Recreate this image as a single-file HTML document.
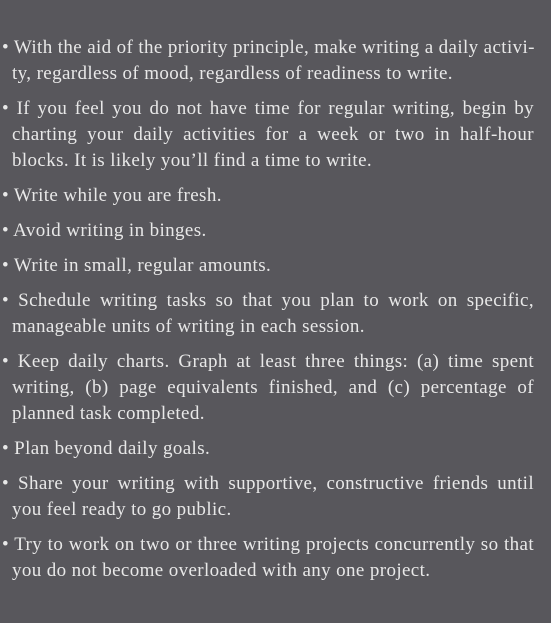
<!DOCTYPE html>
<html><head><style>
html,body{margin:0;padding:0;}
body{width:551px;height:623px;background:#58575c;color:#e8e8e8;font-family:"Liberation Serif",serif;font-size:19px;letter-spacing:0.38px;overflow:hidden;}
.w{position:absolute;left:0;top:35px;width:534px;}
p{margin:0 0 9px 0;padding-left:12px;line-height:26px;}
p span{display:block;white-space:nowrap;}
p span.j{text-align:justify;text-align-last:justify;}
.b{margin-left:-10px;}
</style></head><body><div class="w">
<p><span class="j"><span class="b" style="display:inline">•</span> With the aid of the priority principle, make writing a daily activi-</span><span>ty, regardless of mood, regardless of readiness to write.</span></p>
<p><span class="j"><span class="b" style="display:inline">•</span> If you feel you do not have time for regular writing, begin by</span><span class="j">charting your daily activities for a week or two in half-hour</span><span>blocks. It is likely you’ll find a time to write.</span></p>
<p><span><span class="b" style="display:inline">•</span> Write while you are fresh.</span></p>
<p><span><span class="b" style="display:inline">•</span> Avoid writing in binges.</span></p>
<p><span><span class="b" style="display:inline">•</span> Write in small, regular amounts.</span></p>
<p><span class="j"><span class="b" style="display:inline">•</span> Schedule writing tasks so that you plan to work on specific,</span><span>manageable units of writing in each session.</span></p>
<p><span class="j"><span class="b" style="display:inline">•</span> Keep daily charts. Graph at least three things: (a) time spent</span><span class="j">writing, (b) page equivalents finished, and (c) percentage of</span><span>planned task completed.</span></p>
<p><span><span class="b" style="display:inline">•</span> Plan beyond daily goals.</span></p>
<p><span class="j"><span class="b" style="display:inline">•</span> Share your writing with supportive, constructive friends until</span><span>you feel ready to go public.</span></p>
<p><span class="j"><span class="b" style="display:inline">•</span> Try to work on two or three writing projects concurrently so that</span><span>you do not become overloaded with any one project.</span></p>
</div></body></html>
